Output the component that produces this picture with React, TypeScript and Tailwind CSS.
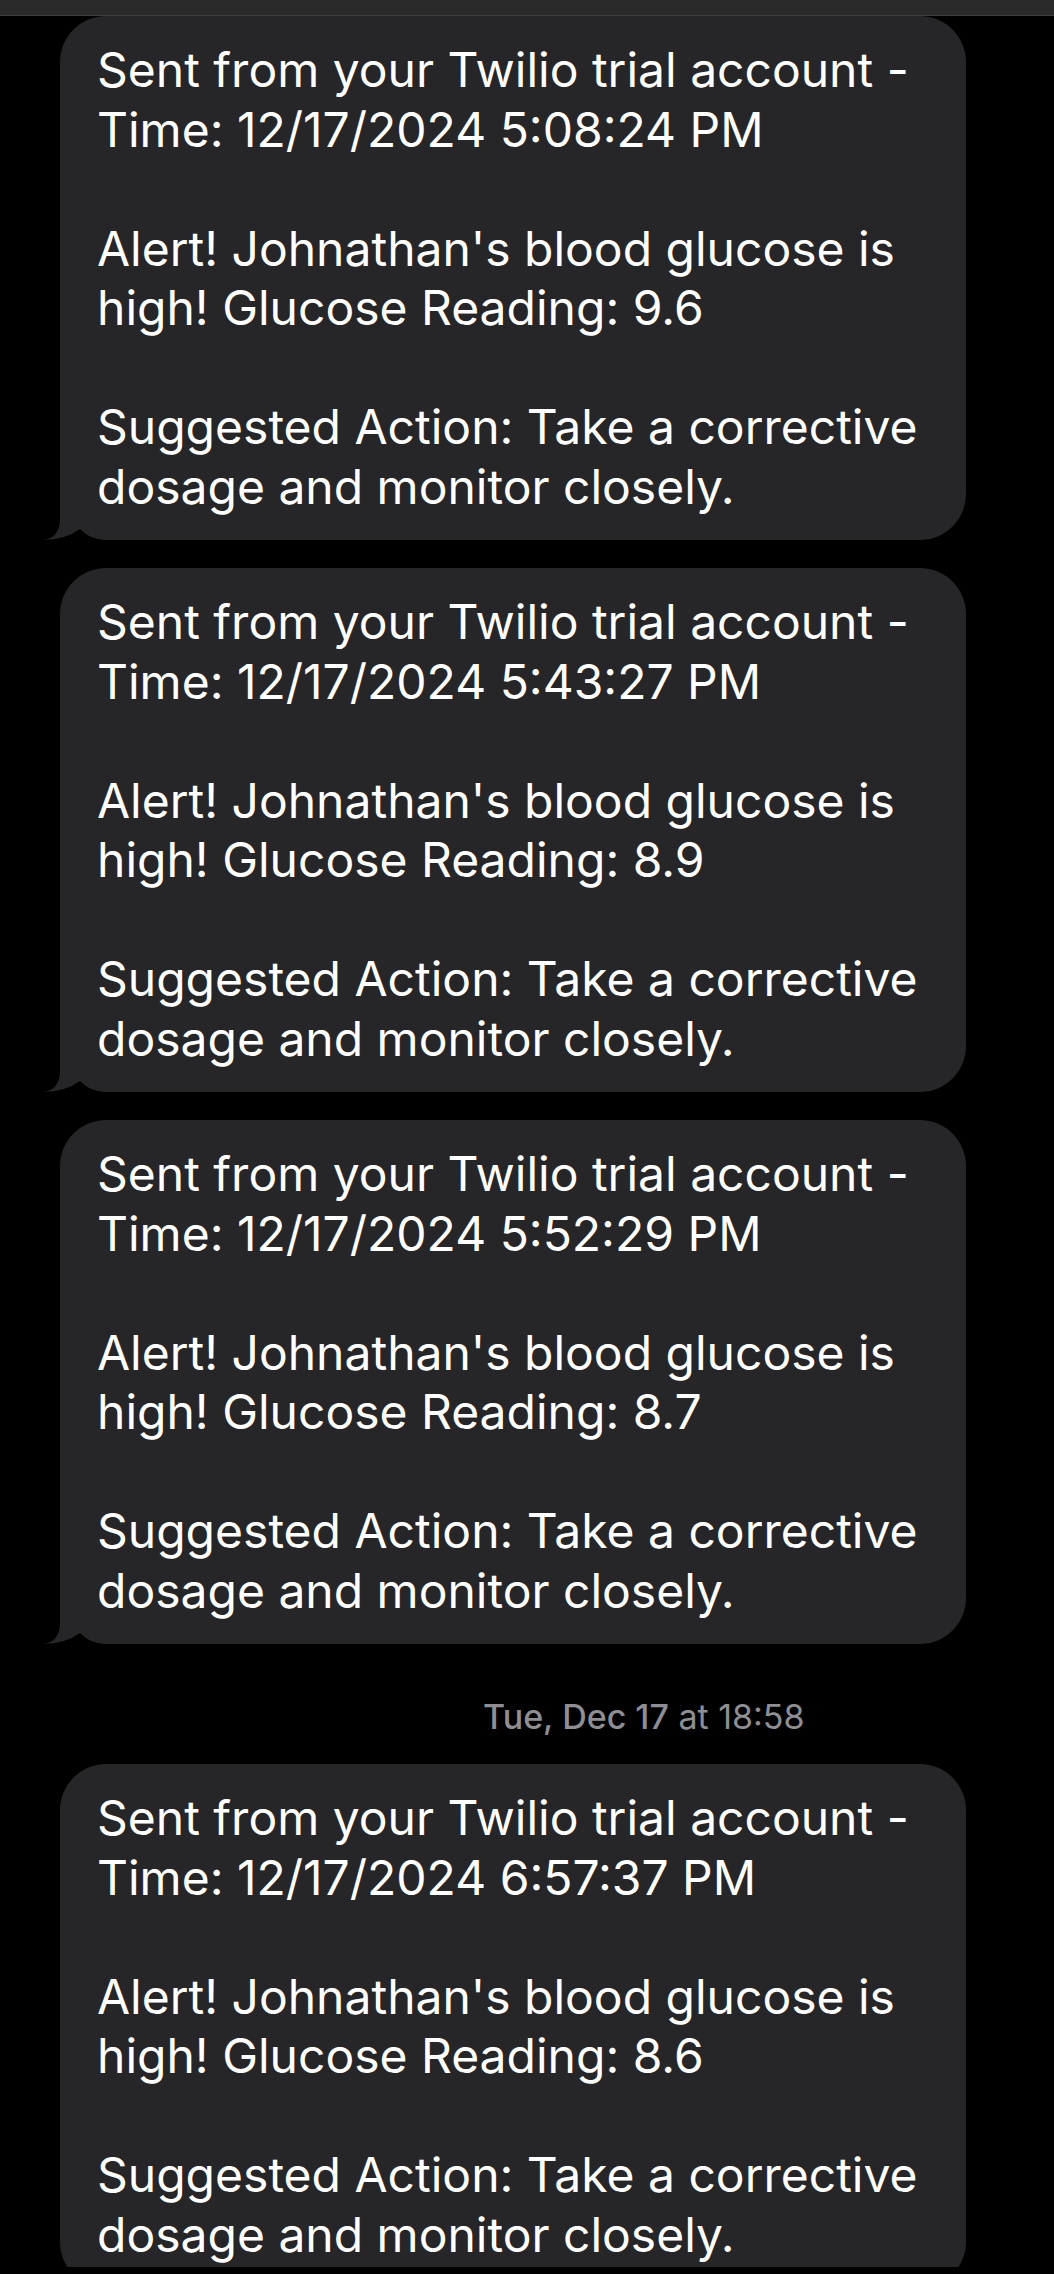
import React from "react";

const BUBBLE = "#262629";

const messages = [
  { time: "5:08:24 PM", reading: "9.6" },
  { time: "5:43:27 PM", reading: "8.9" },
  { time: "5:52:29 PM", reading: "8.7" },
];

function Tail() {
  return (
    <svg
      className="absolute left-[-17px] bottom-0 z-0"
      width="70"
      height="50"
      viewBox="0 0 70 50"
    >
      <rect x="17" y="0" width="53" height="50" fill="#000" />
      <path
        d="M17 0 L17 30 C17 42 10 49 0 50 Q22 50 37 39 Q47 50 63 50 L70 50 L70 0 Z"
        fill={BUBBLE}
      />
    </svg>
  );
}

function Bubble({ time, reading, tail }: { time: string; reading: string; tail: boolean }) {
  return (
    <div className="pl-[60px]">
      <div
        className={
          "relative w-[906px] bg-[#262629] rounded-[46px] pl-[37px] pr-[20px] pt-[24px] pb-[24px] " +
          (tail ? "rounded-bl-none" : "")
        }
      >
        {tail && <Tail />}
        <div className="relative z-10 text-white text-[48px] leading-[59.5px] whitespace-nowrap">
          <div>Sent from your Twilio trial account -</div>
          <div>Time: 12/17/2024 {time}</div>
          <div>&nbsp;</div>
          <div>Alert! Johnathan's blood glucose is</div>
          <div>high! Glucose Reading: {reading}</div>
          <div>&nbsp;</div>
          <div>Suggested Action: Take a corrective</div>
          <div>dosage and monitor closely.</div>
        </div>
      </div>
    </div>
  );
}

export default function App() {
  return (
    <div
      className="w-[1054px] h-[2274px] bg-black overflow-hidden"
      style={{ fontFamily: "Inter, 'Noto Sans', sans-serif" }}
    >
      <div className="h-[16px] bg-[#2a2a2a] border-b border-[#3c3c3e]" />
      <div className="h-[2251px] overflow-hidden flex flex-col">
        <div className="flex flex-col gap-[28px]">
          {messages.map((m) => (
            <Bubble key={m.time} time={m.time} reading={m.reading} tail />
          ))}
        </div>
        <div className="mt-[52px] mb-[28px] pl-[483px] h-[40px] flex items-center text-[34px] text-[#8e8e93] whitespace-nowrap">
          <span className="font-medium">Tue, Dec 17</span>
          <span>&nbsp;at 18:58</span>
        </div>
        <Bubble time="6:57:37 PM" reading="8.6" tail={false} />
      </div>
    </div>
  );
}
